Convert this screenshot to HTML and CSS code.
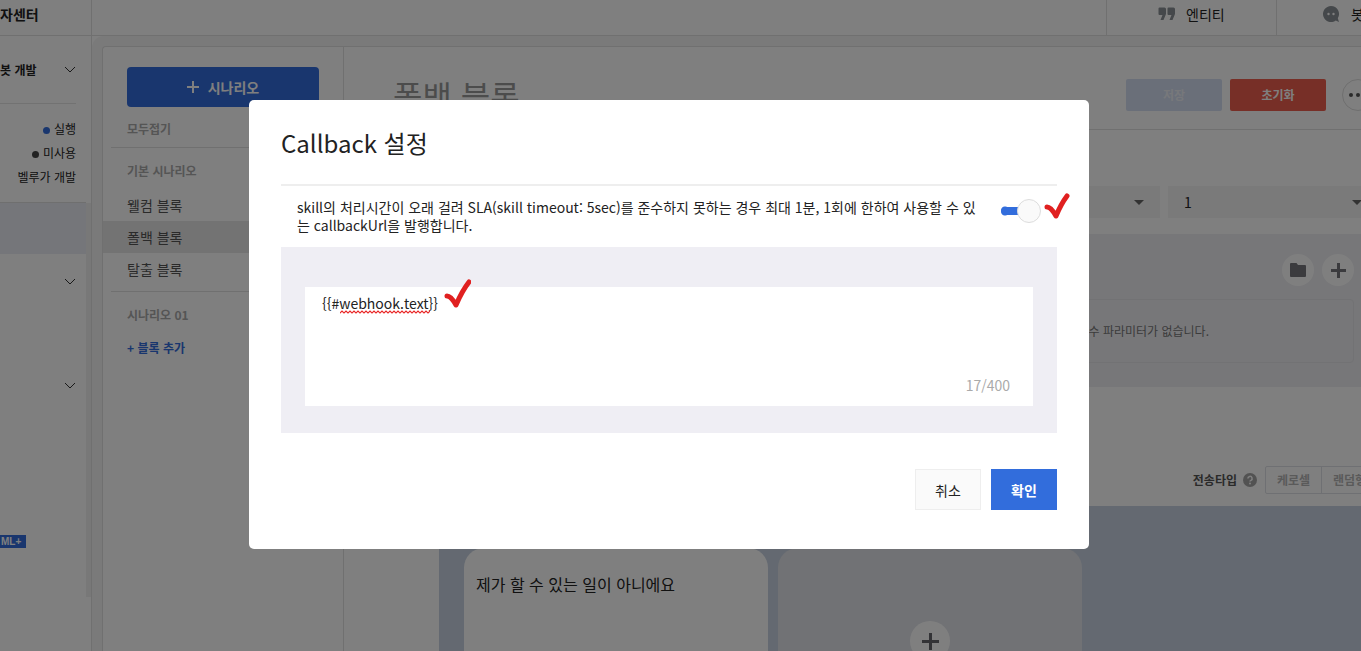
FILE: index.html
```html
<!DOCTYPE html>
<html lang="ko">
<head>
<meta charset="utf-8">
<title>Callback 설정</title>
<link rel="stylesheet" href="styles.css">
</head>
<body>
<div class="app">
  <header class="topbar">
    <div class="brand">자센터</div>
    <nav class="topnav">
      <a class="topnav-item" href="#entity">
        <svg width="18" height="14" viewBox="0 0 18 14" fill="#8b9196"><path d="M1.500.5H6.500Q8 .5 8 2V7L5.500 13H2.500L4.500 8H1.500Q.5 8 .5 7V1.500Q.5.5 1.500.5ZM10.500.5H15.500Q17 .5 17 2V7L14.500 13H11.500L13.500 8H10.500Q9.500 8 9.500 7V1.500Q9.500.5 10.500.5Z"/></svg>
        <span>엔티티</span>
      </a>
      <a class="topnav-item topnav-last" href="#bot">
        <svg width="18" height="18" viewBox="0 0 18 18"><path fill="#8b9196" d="M9 1a8 8 0 1 0 4.800 14.400L17 17l-1.200-3.800A8 8 0 0 0 9 1Z"/><circle cx="6.500" cy="9" r="1.200" fill="#fff"/><circle cx="11.500" cy="9" r="1.200" fill="#fff"/></svg>
        <span>봇</span>
      </a>
    </nav>
  </header>

  <div class="body">
    <aside class="side">
      <div class="side-content">
        <div class="side-bot">
          <div class="side-head"><strong>봇 개발</strong><svg class="chev" viewBox="0 0 12 8"><path d="M1 1l5 5 5-5"/></svg></div>
          <ul class="status">
            <li><i class="dot dot-on"></i>실행</li>
            <li><i class="dot"></i>미사용</li>
            <li>벨루가 개발</li>
          </ul>
        </div>
        <div class="side-current"></div>
        <div class="side-group"><svg class="chev" viewBox="0 0 12 8"><path d="M1 1l5 5 5-5"/></svg></div>
        <div class="side-group"><svg class="chev" viewBox="0 0 12 8"><path d="M1 1l5 5 5-5"/></svg></div>
        <span class="ml">ML+</span>
      </div>
      <div class="scrollbar"></div>
    </aside>

    <div class="workspace">
      <section class="scenarios">
        <button class="new-scenario"><svg width="12" height="12" viewBox="0 0 12 12" stroke="#fff" stroke-width="2"><path d="M6 0v12M0 6h12"/></svg>시나리오</button>
        <button class="fold">모두접기</button>
        <h2 class="group-name">기본 시나리오</h2>
        <ul class="blocks">
          <li><a href="#welcome">웰컴 블록</a></li>
          <li><a class="selected" href="#fallback">폴백 블록</a></li>
          <li><a href="#exit">탈출 블록</a></li>
        </ul>
        <h2 class="group-name group-user">시나리오 01</h2>
        <button class="add-block">+ 블록 추가</button>
      </section>

      <main class="main">
        <div class="main-head">
          <h1>폴백 블록</h1>
          <button class="btn btn-save" disabled>저장</button>
          <button class="btn btn-reset">초기화</button>
          <button class="more" aria-label="더보기"><svg width="20" height="4" viewBox="0 0 20 4" fill="#555"><circle cx="3" cy="2" r="2"/><circle cx="10" cy="2" r="2"/><circle cx="17" cy="2" r="2"/></svg></button>
        </div>
        <div class="selects">
          <div class="select"><select aria-label="스킬"><option></option></select><svg width="10" height="5" viewBox="0 0 10 5"><path d="M0 0h10L5 5z" fill="#666"/></svg></div>
          <div class="select select-num"><select aria-label="버전"><option>1</option></select><svg width="10" height="5" viewBox="0 0 10 5"><path d="M0 0h10L5 5z" fill="#666"/></svg></div>
        </div>
        <section class="params">
          <div class="param-tools">
            <button class="round" aria-label="폴더"><svg width="16" height="14" viewBox="0 0 16 14" fill="#77777d"><path d="M1 0h5.500L8 2h7q1 0 1 1v10q0 1-1 1H1q-1 0-1-1V1q0-1 1-1Z"/></svg></button>
            <button class="round" aria-label="추가"><svg width="15" height="15" viewBox="0 0 15 15" stroke="#77777d" stroke-width="3"><path d="M7.500 0v15M0 7.500h15"/></svg></button>
          </div>
          <div class="param-empty">필수 파라미터가 없습니다.</div>
        </section>
        <div class="send-type">
          <span>전송타입</span>
          <svg width="14" height="14" viewBox="0 0 14 14"><circle cx="7" cy="7" r="7" fill="#a5a5a5"/><path d="M4.900 5.500a2.100 2.100 0 1 1 3.100 1.800q-1 .5-1 1.300" fill="none" stroke="#fff" stroke-width="1.500"/><circle cx="7" cy="10.500" r="1" fill="#fff"/></svg>
          <div class="segment"><button>케로셀</button><button>랜덤형</button></div>
        </div>
        <div class="canvas">
          <article class="card">제가 할 수 있는 일이 아니에요</article>
          <div class="card card-new"><button class="round round-lg" aria-label="응답 추가"><svg width="17" height="17" viewBox="0 0 17 17" stroke="#66666c" stroke-width="3"><path d="M8.500 0v17M0 8.500h17"/></svg></button></div>
        </div>
      </main>
    </div>
  </div>
</div>

<div class="backdrop">
  <div class="dialog" role="dialog" aria-modal="true" aria-labelledby="dialog-title">
    <h2 class="dialog-title" id="dialog-title">Callback 설정</h2>
    <div class="notice">
      <label for="use-callback">skill의 처리시간이 오래 걸려 SLA(skill timeout: 5sec)를 준수하지 못하는 경우 최대 1분, 1회에 한하여 사용할 수 있는 callbackUrl을 발행합니다.</label>
      <div class="switch-box">
        <input class="switch" id="use-callback" type="checkbox" role="switch" checked>
        <svg class="tick tick-switch" viewBox="0 0 28 30"><path d="M4 17Q8 17 13 26Q18 14 24 6"/></svg>
      </div>
    </div>
    <div class="message">
      <div class="message-box">
        <textarea aria-label="콜백 메시지" spellcheck="false">{{#webhook.text}}</textarea>
        <svg class="wave" width="90" height="4" viewBox="0 0 90 4"><defs><pattern id="wave" width="4" height="4" patternUnits="userSpaceOnUse"><path d="M-1 4L2 1l3 3" fill="none" stroke="#e82020" stroke-width="1.200"/></pattern></defs><rect width="90" height="4" fill="url(#wave)"/></svg>
        <svg class="tick tick-text" viewBox="0 0 28 30"><path d="M4 18Q8 18 13 27Q19 13 26 4"/></svg>
        <div class="count">17/400</div>
      </div>
    </div>
    <div class="actions">
      <button class="cancel">취소</button>
      <button class="confirm">확인</button>
    </div>
  </div>
</div>
</body>
</html>
```

FILE: styles.css
```css
* { box-sizing: border-box; }
body {
  margin: 0;
  overflow: hidden;
  background: #fff;
  color: #222;
  font: 14px/20px "Noto Sans CJK KR", "Noto Sans", sans-serif;
}
button, select, textarea, input { margin: 0; padding: 0; border: 0; background: none; color: inherit; font: inherit; }
h1, h2, ul { margin: 0; padding: 0; font-weight: 400; list-style: none; }
a { color: inherit; text-decoration: none; }

/* The editor is wider than the viewport and runs off its right edge. */
.app { display: flex; flex-direction: column; width: calc(100% + 24px); height: 100vh; overflow: hidden; }

.topbar { display: flex; flex: none; height: 36px; border-bottom: 1px solid #e0e0e0; overflow: hidden; }
.brand { width: 92px; padding-top: 4px; border-right: 1px solid #e0e0e0; font-weight: 700; }
.topnav { display: flex; margin-left: auto; }
.topnav-item { display: flex; gap: 10px; align-items: center; width: 170px; padding: 0 0 7px 51px; border-left: 1px solid #e0e0e0; }
.topnav-last { width: 109px; padding-left: 45px; gap: 11px; }

.body { display: flex; flex: 1; min-height: 0; }
.side { display: flex; flex: none; width: 92px; border-right: 1px solid #e0e0e0; }
.side-content { flex: 1; }
.scrollbar { width: 5px; height: 394px; margin-top: 167px; background: #f0f0f0; }
.side-bot { padding-right: 10px; border-bottom: 1px solid #dedede; height: 167px; }
.side-head { display: flex; align-items: center; justify-content: space-between; height: 68px; border-bottom: 1px solid #e4e4e4; font-size: 12px; }
.chev { width: 12px; height: 8px; fill: none; stroke: #333; stroke-width: 1; }
.status { padding-top: 13px; font-size: 12px; line-height: 24px; text-align: right; }
.dot { display: inline-block; width: 7px; height: 7px; margin-right: 4px; border-radius: 50%; background: #444; }
.dot-on { background: #326ddc; }
.side-current { height: 51px; background: #ebedf5; }
.side-group { display: flex; justify-content: flex-end; height: 104px; padding: 24px 10px 0 0; }
.ml { display: block; width: 26px; margin-top: 73px; padding-left: 1px; background: #326ddc; color: #fff; font: 700 10px/13px "Liberation Sans", sans-serif; }

.workspace { display: flex; flex: 1; min-width: 0; margin: 10px 0 0 10px; border: solid #e0e0e0; border-width: 1px 0 0 1px; border-radius: 4px 0 0 0; box-shadow: 0 0 0 10px #f4f4f4; background: #fff; }
.scenarios { flex: none; width: 241px; padding-top: 20px; border-right: 1px solid #e0e0e0; color: #555; }
.new-scenario { display: flex; align-items: center; justify-content: center; gap: 9px; width: 192px; height: 40px; margin: 0 24px; border-radius: 4px; background: #326ddc; color: #fff; font-weight: 700; }
.fold { display: block; padding: 12px 24px 8px; font-size: 12px; font-weight: 700; color: #aaa; }
.group-name { margin-left: 8px; padding: 13px 16px 8px; border-top: 1px solid #e0e0e0; color: #aaa; font-size: 12px; font-weight: 700; }
.group-user { margin-top: 6px; }
.blocks a { display: block; padding: 6px 24px; }
.blocks .selected { background: #e6e6e7; }
.add-block { padding: 5px 24px; color: #326ddc; font-size: 12px; font-weight: 700; }

.main { display: flex; flex: 1; flex-direction: column; min-width: 0; }
.main-head { display: flex; flex: none; height: 83px; padding: 32px 11px 0 49px; border-bottom: 1px solid #e0e0e0; }
.main-head h1 { flex: 1; font-size: 32px; line-height: 32px; color: #999; }
.btn { width: 96px; height: 32px; margin-right: 8px; border-radius: 2px; color: #fff; font-size: 12px; font-weight: 700; }
.btn-save { background: #d4def2; color: #eef1f7; }
.btn-reset { margin-right: 16px; background: #ee5f4f; }
.more { display: flex; align-items: center; justify-content: center; width: 32px; height: 32px; border: 1px solid #ddd; border-radius: 50%; }
.selects { display: flex; flex: none; gap: 8px; margin: 56px 7px 0 95px; }
.select { display: flex; flex: 1; align-items: center; height: 32px; padding: 0 16px; background: #f4f4f4; }
.select select { flex: 1; appearance: none; }
.select-num { flex: none; width: 210px; }
.params { flex: none; margin: 16px 7px 0 95px; padding: 20px 24px 24px; background: #efeff3; }
.param-tools { display: flex; justify-content: flex-end; gap: 8px; margin-bottom: 13px; }
.round { display: flex; align-items: center; justify-content: center; width: 32px; height: 32px; border-radius: 50%; background: #fff; }
.round-lg { width: 40px; height: 40px; }
.param-empty { height: 64px; padding-right: 144px; border: 1px solid #e4e4e8; border-radius: 4px; color: #777; font-size: 12px; line-height: 62px; text-align: right; }
.send-type { display: flex; flex: none; align-items: center; justify-content: flex-end; margin-top: 79px; padding-right: 7px; color: #555; font-size: 12px; font-weight: 700; }
.send-type > svg { margin: 0 8px 0 6px; }
.segment { display: flex; width: 113px; height: 28px; border: 1px solid #dfe0e6; border-radius: 2px; color: #b4b4b4; }
.segment button { flex: 1; }
.segment button + button { border-left: 1px solid #dfe0e6; }
.canvas { display: flex; flex: 1; gap: 10px; margin: 12px 0 0 95px; padding: 42px 25px 0; background: #c9d3e2; }
.card { width: 304px; padding: 26px 12px; border-radius: 20px 20px 0 0; background: #fff; font-size: 16px; }
.card-new { display: flex; justify-content: center; padding-top: 73px; background: #e3e5ea; }

.backdrop { position: fixed; inset: 0; display: flex; align-items: center; justify-content: center; padding: 0 23px 2px 0; background: rgba(0, 0, 0, .5); }
.dialog { width: 840px; padding: 23px 32px 39px; border-radius: 5px; background: #fff; }
.dialog-title { padding-bottom: 21px; border-bottom: 2px solid #eee; font-size: 24px; line-height: 40px; }
.notice { display: flex; justify-content: space-between; padding: 12px 16px 13px; line-height: 18px; }
.notice label { width: 680px; word-break: break-all; }
.switch-box { position: relative; display: flex; height: 24px; align-items: flex-end; }
.switch { display: flex; align-items: center; justify-content: flex-end; width: 40px; height: 22px; appearance: none; border-radius: 11px; background: linear-gradient(#326ddc, #326ddc) 6px 50% / 24px 8px no-repeat, radial-gradient(circle at 4px 11px, #326ddc 4px, transparent 5px); }
.switch::after { content: ""; width: 22px; height: 22px; border: 1px solid #ddd; border-radius: 50%; background: #fafafa; }
.tick { position: absolute; width: 28px; height: 30px; fill: none; stroke: #e02020; stroke-width: 5; stroke-linecap: round; stroke-linejoin: round; }
.tick-switch { left: 42px; top: -8px; }
.message { padding: 40px 24px 27px; background: #efeef4; }
.message-box { position: relative; padding: 7px 23px 11px 17px; background: #fff; }
.message textarea { display: block; width: 100%; height: 81px; resize: none; outline: 0; line-height: 18px; }
.wave { position: absolute; left: 35px; top: 23px; }
.tick-text { left: 138px; top: -9px; }
.count { color: #aaa; text-align: right; }
.actions { display: flex; justify-content: flex-end; gap: 10px; margin-top: 36px; }
.actions button { width: 66px; height: 41px; }
.cancel { border: 1px solid #eee; background: #fafafa; }
.actions .confirm { background: #326ddc; color: #fff; font-weight: 700; }
```
